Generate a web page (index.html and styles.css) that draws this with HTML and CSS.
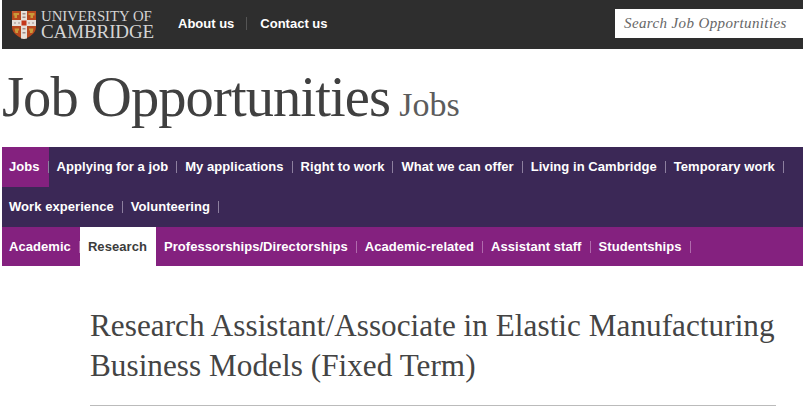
FILE: index.html
```html
<!DOCTYPE html>
<html lang="en">
<head>
<meta charset="utf-8">
<title>Job Opportunities</title>
<link rel="stylesheet" href="styles.css">
</head>
<body>
<header class="topbar">
  <a class="logo" href="#">
    <svg class="crest" width="24" height="28" viewBox="0 0 24 28">
      <path d="M0 0H24V16C24 22 18 26 12 28C6 26 0 22 0 16Z" fill="#b8481e"/>
      <path d="M9 0H15V27.5L12 28L9 27.5ZM0 9H24V15H0Z" fill="#e6e0da"/>
      <rect x="9.5" y="9.5" width="5" height="5" fill="#c4381c"/>
      <path d="M1.500 2H7V4H5V7H2.500V4.500H1.500ZM16.500 2H22.500V4.500H21V7H18.500V4H16.500ZM2.500 17.500H7V19.500H6V22H3.500ZM17 17.500H21.500L20.500 22H18V19.500H17Z" fill="#c99a3a"/>
      <path d="M10.500 2H13.500V3.500H10.500ZM10.500 5.500H13.500V7H10.500ZM10.500 17H13.500V18.500H10.500ZM10.500 21H13.500V22.500H10.500ZM2 11.500H4V12.500H2ZM6 11.500H8V12.500H6ZM16 11.500H18V12.500H16ZM20 11.500H22V12.500H20Z" fill="#a08c88"/>
    </svg>
    <span class="wordmark"><span class="w1">UNIVERSITY OF</span><span class="w2">CAMBRIDGE</span></span>
  </a>
  <nav class="toplinks"><a href="#">About us</a><a href="#">Contact us</a></nav>
  <div class="search">Search Job Opportunities</div>
</header>
<div class="titlewrap">
  <h1 class="sitetitle">Job Opportunities <span class="sub">Jobs</span></h1>
</div>
<nav class="nav1">
  <a class="on" href="#">Jobs</a><a href="#">Applying for a job</a><a href="#">My applications</a><a href="#">Right to work</a><a href="#">What we can offer</a><a href="#">Living in Cambridge</a><a href="#">Temporary work</a><a class="first" href="#">Work experience</a><a href="#">Volunteering</a>
</nav>
<nav class="nav2">
  <a href="#">Academic</a><a class="on" href="#">Research</a><a href="#">Professorships/Directorships</a><a href="#">Academic-related</a><a href="#">Assistant staff</a><a href="#">Studentships</a>
</nav>
<main class="content">
  <h2 class="jobtitle">Research Assistant/Associate in Elastic Manufacturing Business Models (Fixed Term)</h2>
  <hr class="rule">
</main>
</body>
</html>
```
FILE: styles.css
```css
* { box-sizing: border-box; }
html, body { margin: 0; padding: 0; background: #fff; overflow: hidden; }
body { height: 406px; padding: 0 1px 0 2px; font-family: "Liberation Sans", Arial, sans-serif; color: #3c3c3c; }
a { text-decoration: none; color: inherit; }

.topbar { display: flex; align-items: center; height: 49px; background: #2e2e2e; padding-left: 10px; }
.logo { display: flex; align-items: center; gap: 5px; width: 166px; }
.crest { flex: none; }
.wordmark { display: flex; flex-direction: column; font-family: "Liberation Serif", serif; color: #d4d4d4; }
.w1 { font-size: 14.800px; line-height: 14px; white-space: nowrap; }
.w2 { font-size: 19px; line-height: 17px; letter-spacing: -0.1px; white-space: nowrap; }
.toplinks { display: flex; color: #fff; font-size: 13px; font-weight: bold; margin-bottom: 2px; }
.toplinks a { padding-right: 12px; margin-right: 13px; border-right: 1px solid #555; line-height: 13px; }
.toplinks a:last-child { border: 0; }
.search { margin-left: auto; width: 188px; height: 29px; margin-bottom: 2px; background: #fff; padding-left: 9px; font: italic 15px/29px "Liberation Serif", serif; color: #666; letter-spacing: 0.38px; white-space: nowrap; }

.titlewrap { height: 98px; padding-top: 13px; }
.sitetitle { margin: 0; font: normal 56.500px/70px "Liberation Serif", serif; color: #404040; white-space: nowrap; letter-spacing: -0.9px; }
.sub { font-size: 34px; color: #5c5c5c; letter-spacing: 0; margin-left: -4px; }

.nav1, .nav2 { display: flex; flex-wrap: wrap; color: #fff; font-size: 13px; font-weight: bold; letter-spacing: 0.06px; }
.nav1 { background: #3b2856; }
.nav2 { background: #84217f; }
.nav1 a { position: relative; height: 40px; line-height: 40px; padding: 0 9px 0 8px; }
.nav2 a { position: relative; height: 39px; line-height: 39px; padding: 0 9px 0 8px; }
.nav1 a:first-child, .nav2 a:first-child, .nav1 a.first { padding-left: 7px; }
.nav1 a::after, .nav2 a::after { content: ""; position: absolute; right: 0; top: 14px; height: 12px; width: 1px; background: #8d7f9f; }
.nav2 a::after { background: #b06bad; }
.nav1 a.on { background: #84217f; }
.nav2 a.on { background: #fff; color: #3c3c3c; }
.nav2 a.on::after { display: none; }

.content { padding: 40px 27px 0 88px; }
.jobtitle { margin: 0; font: normal 31.200px/40px "Liberation Serif", serif; color: #444; letter-spacing: 0.04px; }
.rule { margin: 19px 0 0; border: 0; border-top: 1px solid #bbb; }
```
